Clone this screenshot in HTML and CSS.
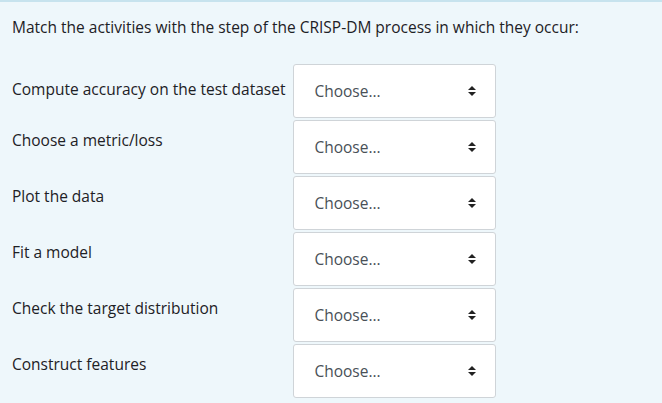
FILE: index.html
```html
<!DOCTYPE html>
<html>
<head>
<meta charset="utf-8">
<link rel="stylesheet" href="styles.css">
</head>
<body>
<div class="que">
  <div class="qtext">Match the activities with the step of the CRISP-DM process in which they occur:</div>
  <table class="answer">
    <tbody>
      <tr class="first">
        <td class="text">Compute accuracy on the test dataset</td>
        <td class="control"><div class="select"><span>Choose...</span><svg class="arrows" width="8" height="10" viewBox="0 0 8 10"><path d="M4 0 L8 4 L0 4 Z M0 6 L8 6 L4 10 Z" fill="#222"/></svg></div></td>
      </tr>
      <tr>
        <td class="text">Choose a metric/loss</td>
        <td class="control"><div class="select"><span>Choose...</span><svg class="arrows" width="8" height="10" viewBox="0 0 8 10"><path d="M4 0 L8 4 L0 4 Z M0 6 L8 6 L4 10 Z" fill="#222"/></svg></div></td>
      </tr>
      <tr>
        <td class="text">Plot the data</td>
        <td class="control"><div class="select"><span>Choose...</span><svg class="arrows" width="8" height="10" viewBox="0 0 8 10"><path d="M4 0 L8 4 L0 4 Z M0 6 L8 6 L4 10 Z" fill="#222"/></svg></div></td>
      </tr>
      <tr>
        <td class="text">Fit a model</td>
        <td class="control"><div class="select"><span>Choose...</span><svg class="arrows" width="8" height="10" viewBox="0 0 8 10"><path d="M4 0 L8 4 L0 4 Z M0 6 L8 6 L4 10 Z" fill="#222"/></svg></div></td>
      </tr>
      <tr>
        <td class="text">Check the target distribution</td>
        <td class="control"><div class="select"><span>Choose...</span><svg class="arrows" width="8" height="10" viewBox="0 0 8 10"><path d="M4 0 L8 4 L0 4 Z M0 6 L8 6 L4 10 Z" fill="#222"/></svg></div></td>
      </tr>
      <tr>
        <td class="text">Construct features</td>
        <td class="control"><div class="select"><span>Choose...</span><svg class="arrows" width="8" height="10" viewBox="0 0 8 10"><path d="M4 0 L8 4 L0 4 Z M0 6 L8 6 L4 10 Z" fill="#222"/></svg></div></td>
      </tr>
    </tbody>
  </table>
</div>
</body>
</html>
```
FILE: styles.css
```css
html, body {
  margin: 0;
  padding: 0;
  background: #eef7fb;
}
body {
  font-family: "Open Sans", "Noto Sans", sans-serif;
  font-size: 15.5px;
  color: #1d2125;
}
.que {
  border-top: 2px solid #c7e3ee;
  padding: 15px 0 0 12px;
  height: 401px;
  box-sizing: border-box;
}
.qtext {
  line-height: 20px;
  margin-bottom: 27px;
}
.answer {
  border-collapse: collapse;
}
.answer td {
  padding: 0;
  vertical-align: top;
}
.answer td.text {
  padding: 10px 8px 0 0;
  line-height: 20px;
  white-space: nowrap;
}
.answer tr.first td.text {
  padding-top: 15px;
}
.answer td.control {
  padding-bottom: 2px;
}
.select {
  box-sizing: border-box;
  width: 203px;
  height: 54px;
  background: #fff;
  border: 1px solid #cfd4d8;
  border-radius: 3px;
  display: flex;
  align-items: center;
  justify-content: space-between;
  padding: 0 19px 0 20px;
  color: #495057;
  font-size: 15.5px;
}
.arrows {
  display: block;
}
```
